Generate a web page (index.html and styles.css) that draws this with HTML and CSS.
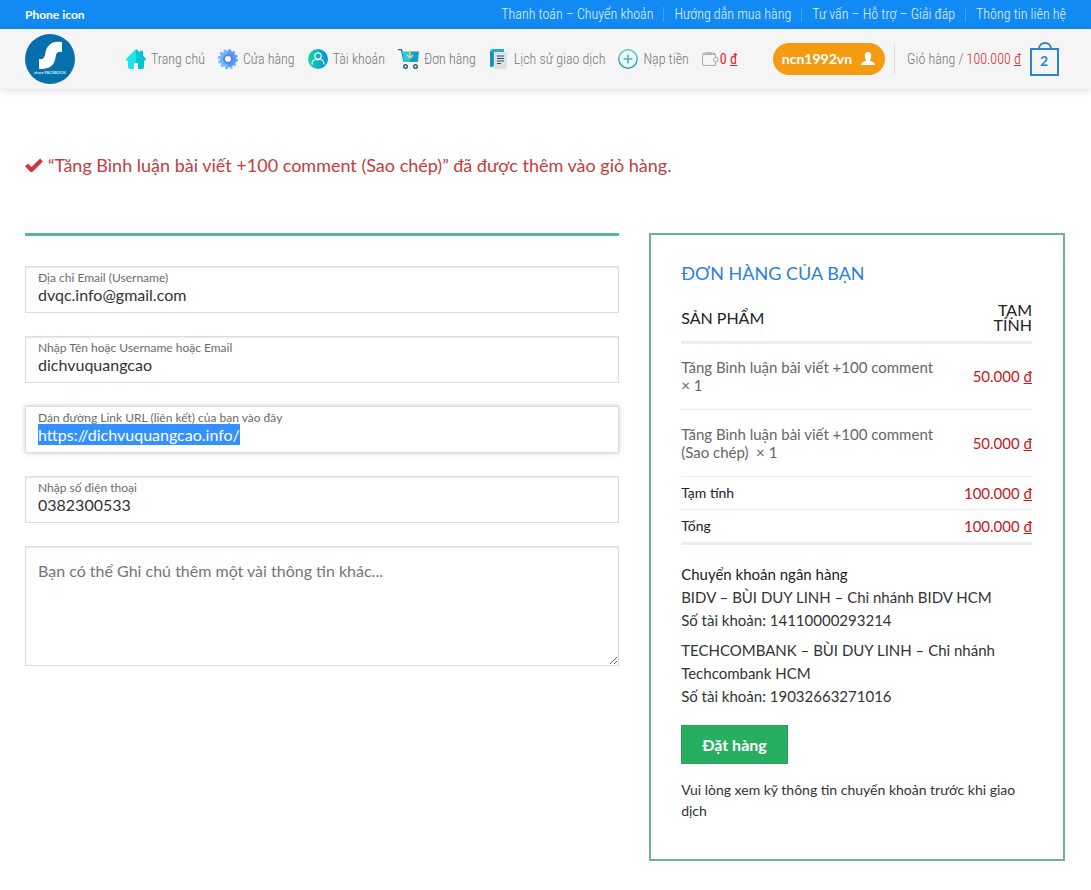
FILE: index.html
```html
<!DOCTYPE html>
<html lang="vi">
<head>
<meta charset="utf-8">
<meta name="viewport" content="width=device-width, initial-scale=1">
<title>Thanh toán</title>
<link rel="stylesheet" href="styles.css">
</head>
<body>
<div class="topbar">
  <strong class="topbar-title">Phone icon</strong>
  <nav class="topbar-nav">
    <a href="#">Thanh toán – Chuyển khoản</a>
    <a href="#">Hướng dẫn mua hàng</a>
    <a href="#">Tư vấn – Hỗ trợ – Giải đáp</a>
    <a href="#">Thông tin liên hệ</a>
  </nav>
</div>
<header class="header">
  <a class="logo" href="#" aria-label="share FACEBOOK">
    <svg width="50" height="50" viewBox="0 0 50 50"><circle cx="25" cy="25" r="25" fill="#0670ad"/><path d="M37 8v10q-5-1-6 3-1 9-6 12-4 2-11 2V25q5 1 6-4 1-9 7-12 4-2 10-1z" fill="#fff"/><text x="25" y="40" class="logo-text" text-anchor="middle">share FACEBOOK</text></svg>
  </a>
  <nav class="menu">
    <a href="#"><svg width="20" height="20" viewBox="0 0 20 20"><path d="M10 0 0 10v1.500h2V18q0 2 2 2h4v-6h2z" fill="#1de4ed"/><path d="m10 0 4 3.500V2h3v4.500l3 3.500v1.500h-2V18q0 2-2 2h-4v-6h-2z" fill="#06c4d3"/></svg>Trang chủ</a>
    <a href="#"><svg width="20" height="20" viewBox="0 0 20 20"><circle cx="10" cy="10" r="9" fill="none" stroke="#6fb1fb" stroke-width="2" stroke-dasharray="2.8 1.912"/><circle cx="10" cy="10" r="8.3" fill="#74b4fb"/><path d="M10 1.700a8.300 8.300 0 0 1 0 16.600z" fill="#5e96f7"/><circle cx="10" cy="10" r="5" fill="#4c87ee"/><circle cx="10" cy="10" r="3" fill="#f5f5f5"/></svg>Cửa hàng</a>
    <a href="#"><svg width="20" height="20" viewBox="0 0 20 20"><defs><linearGradient id="user-fill"><stop stop-color="#12d6a0"/><stop offset="1" stop-color="#0991dc"/></linearGradient></defs><circle cx="10" cy="10" r="10" fill="url(#user-fill)"/><g fill="none" stroke="#e9fffa" stroke-width="1.200"><circle cx="10" cy="7" r="3.200"/><path d="M4 15.500c0-3 2-5 4-5.500l2 1 2-1c2 .5 4 2.500 4 5.500"/></g></svg>Tài khoản</a>
    <a href="#"><svg width="21" height="20" viewBox="0 0 21 20"><path d="M0 .7h3.500L6 12.500" fill="none" stroke="#256c91" stroke-width="1.300"/><path d="M4 2.500h8V13H6z" fill="#25c7eb"/><path d="M12 2.500h9L20 13h-8z" fill="#159ed1"/><path d="M12 1v7.500M9 6l3 3 3-3" fill="none" stroke="#ecdc5b" stroke-width="1.500"/><circle cx="7.500" cy="17.500" r="1.800" fill="#fff" stroke="#225f80" stroke-width="1.400"/><circle cx="17.500" cy="17.500" r="1.800" fill="#fff" stroke="#225f80" stroke-width="1.400"/></svg>Đơn hàng</a>
    <a href="#"><svg width="20" height="20" viewBox="0 0 20 20"><path d="M3 0h12v3H6v15H1V2z" fill="#24abd4"/><path d="M1 3h3v15H2z" fill="#2187ad"/><path d="M5 3h13v15q0 2-2 2H6q-3-1-2-3h1z" fill="#dce3e8"/><path d="M8 7h7M8 9.500h7M8 12h7M8 14.500h4" stroke="#34495d" stroke-width="1.200"/></svg>Lịch sử giao dịch</a>
    <a href="#"><svg width="20" height="20" viewBox="0 0 20 20"><defs><linearGradient id="plus-stroke" x2="0" y2="1"><stop stop-color="#4bd79e"/><stop offset="1" stop-color="#2c9ad9"/></linearGradient></defs><circle cx="10" cy="10" r="9.200" fill="none" stroke="url(#plus-stroke)" stroke-width="1.500"/><path d="M10 5.500v9M5.500 10h9" stroke="#37bcc0" stroke-width="1.600"/></svg>Nạp tiền</a>
    <a href="#" class="wallet"><svg width="17" height="14" viewBox="0 0 17 14"><path d="M13.500 4V2.500h-12q-1-.8 0-1.500h11v1.500M.6 2v10q0 1.400 1.400 1.400h11.500V10M13.500 4v1.500M4 1.500 7 .5l3 1M12.500 5.500h3.200v4.200h-3.200q-2-2 0-4.200z" fill="none" stroke="#aaa"/></svg><span class="money">0 <u>đ</u></span></a>
  </nav>
  <a class="account" href="#">ncn1992vn<svg width="14" height="14" viewBox="0 0 14 14"><path d="M7 0c2.500 0 3.500 2 3.200 4.500-.2 2-1.200 3-1.200 4 1 1 4 1.200 5 3.500V13H0v-1c1-2.300 4-2.500 5-3.500 0-1-1-2-1.200-4C3.500 2 4.500 0 7 0z" fill="#fff"/></svg></a>
  <a class="cart" href="#"><span>Giỏ hàng / <span class="money">100.000 <u>đ</u></span></span><svg width="29" height="35" viewBox="0 0 29 35"><path d="M1 7h27v26H1zM9 7c0-8 12-8 12 0" fill="none" stroke="#2b84d0" stroke-width="2"/><text x="14" y="24" text-anchor="middle" class="cart-count">2</text></svg></a>
</header>
<main class="page">
  <p class="notice"><svg width="18" height="14" viewBox="0 0 18 14"><path d="M1.500 7 6.500 12 16.500 2" fill="none" stroke="#d33638" stroke-width="4"/></svg>“Tăng Bình luận bài viết +100 comment (Sao chép)” đã được thêm vào giỏ hàng.</p>
  <form class="checkout">
    <section class="details">
      <div class="field"><label for="email">Địa chỉ Email (Username)</label><input id="email" type="text" value="dvqc.info@gmail.com"></div>
      <div class="field"><label for="name">Nhập Tên hoặc Username hoặc Email</label><input id="name" type="text" value="dichvuquangcao"></div>
      <div class="field"><label for="link">Dán đường Link URL (liên kết) của bạn vào đây</label><input id="link" type="text" value="https://dichvuquangcao.info/"></div>
      <div class="field"><label for="phone">Nhập số điện thoại</label><input id="phone" type="text" value="0382300533"></div>
      <textarea class="note" aria-label="Ghi chú" placeholder="Bạn có thể Ghi chú thêm một vài thông tin khác..."></textarea>
    </section>
    <section class="order">
      <div class="order-box">
        <h2>ĐƠN HÀNG CỦA BẠN</h2>
        <table>
          <thead><tr><th>SẢN PHẨM</th><th class="amount">TẠM TÍNH</th></tr></thead>
          <tbody>
            <tr><td>Tăng Bình luận bài viết +100 comment <strong>× 1</strong></td><td class="amount">50.000 <u>đ</u></td></tr>
            <tr><td>Tăng Bình luận bài viết +100 comment (Sao chép)&nbsp; <strong>× 1</strong></td><td class="amount">50.000 <u>đ</u></td></tr>
          </tbody>
          <tfoot>
            <tr><th>Tạm tính</th><td class="amount">100.000 <u>đ</u></td></tr>
            <tr><th>Tổng</th><td class="amount">100.000 <u>đ</u></td></tr>
          </tfoot>
        </table>
        <div class="payment">
          <h3>Chuyển khoản ngân hàng</h3>
          <p>BIDV – BÙI DUY LINH – Chi nhánh BIDV HCM<br>Số tài khoản: 14110000293214</p>
          <p>TECHCOMBANK – BÙI DUY LINH – Chi nhánh Techcombank HCM<br>Số tài khoản: 19032663271016</p>
        </div>
        <button class="submit" type="submit">Đặt hàng</button>
        <p class="terms">Vui lòng xem kỹ thông tin chuyển khoản trước khi giao dịch</p>
      </div>
    </section>
  </form>
</main>
<script src="script.js"></script>
</body>
</html>
```
FILE: styles.css
```css
* { box-sizing: border-box; }
body { margin: 0; background: #fff; color: #333; font: 15px/23px Lato, "Noto Sans", sans-serif; }
a { color: inherit; text-decoration: none; }
p, h2, h3 { margin: 0; }
svg { flex: none; }
.topbar { display: flex; justify-content: space-between; align-items: center; min-height: 29px; padding: 0 25px; background: #128af3; color: #fff; }
.topbar-title { font-size: 12px; font-weight: 700; }
.topbar-nav { display: flex; font: 300 14px/15px "Roboto Condensed", "Liberation Sans Narrow", Roboto, sans-serif; color: #e2f2ff; }
.topbar-nav a { padding: 0 10px; border-left: 1px solid #419ff5; }
.topbar-nav a:first-child { border-left: 0; }
.topbar-nav a:last-child { padding-right: 0; }
.header { display: flex; align-items: center; min-height: 60px; padding: 0 32px 0 25px; background: #f5f5f5; box-shadow: 0 1px 8px rgba(0, 0, 0, .15); color: #777; font: 300 14px/20px "Roboto Condensed", "Liberation Sans Narrow", Roboto, sans-serif; }
.logo { display: flex; margin-right: 51px; }
.logo-text { font: 700 4px Lato, sans-serif; fill: #d5e9f5; }
.menu { display: flex; gap: 13px; }
.menu a { display: flex; align-items: center; gap: 5px; white-space: nowrap; }
.menu .wallet { gap: 1px; }
.money { color: #d8262c; }
.menu .money { font-weight: 400; }
.account { display: flex; align-items: center; gap: 9px; height: 32px; margin-left: auto; padding: 0 10px 0 9px; border-radius: 16px; background: #f39c12; color: #fff; font: 700 14px/20px Lato, sans-serif; }
.cart { display: flex; align-items: center; gap: 9px; margin-left: 9px; padding-left: 13px; background: linear-gradient(#ddd, #ddd) left center / 1px 30px no-repeat; white-space: nowrap; }
.cart-count { font: 700 14px Lato, sans-serif; fill: #2b84d0; }
.page { padding: 62px 11px 29px 10px; }
.notice { display: flex; align-items: center; gap: 5px; padding: 0 15px; color: #c43c3e; font-size: 18px; line-height: 28px; }
.checkout { display: grid; grid-template-columns: 7fr 5fr; margin-top: 54px; }
.details, .order { padding: 0 15px; }
.details::before { content: ""; display: block; height: 3px; margin-bottom: 30px; background: #5bb79b; }
.field { display: flex; flex-direction: column; height: 47px; margin-bottom: 23px; padding: 4px 12px 0; border: 1px solid #ddd; box-shadow: inset 0 1px 2px rgba(0, 0, 0, .1); }
.field:focus-within { box-shadow: 0 0 5px #ccc; }
.field label { color: #6b6b6b; font-size: 12px; line-height: 13px; }
.field input { padding: 0; border: 0; outline: 0; background: none; color: #333; font: 16px/21px Lato, "Noto Sans", sans-serif; }
.field input::selection { background: #3390ff; color: #fff; }
.note { display: block; width: 100%; height: 120px; padding: 12px; border: 1px solid #ddd; box-shadow: inset 0 1px 2px rgba(0, 0, 0, .1); font: 16px/23px Lato, "Noto Sans", sans-serif; }
.note::placeholder { color: #757575; }
.order-box { padding: 26px 31px 38px 30px; border: 2px solid #6ab19e; }
h2 { color: #2b7fdc; font-size: 18px; font-weight: 400; line-height: 25px; }
table { width: 100%; margin-top: 16px; border-collapse: collapse; line-height: 18px; }
th, td { padding: 0; text-align: left; border-bottom: 1px solid #ececec; }
th { color: #222; font-weight: 400; }
thead th { height: 40px; padding-bottom: 8px; border-bottom: 3px solid #ececec; font-size: 16px; line-height: 15px; }
tbody td { height: 67px; color: #666; }
tbody td:first-child { padding-right: 20px; }
tbody strong { display: inline-block; font-weight: 400; }
tfoot th, tfoot td { height: 33px; }
tfoot th { font-size: 14px; }
tfoot tr:last-child > * { height: 34px; border-bottom: 3px solid #ececec; }
.amount { width: 70px; text-align: right; }
td.amount { color: #c9151b; white-space: nowrap; }
.payment { margin-top: 17px; }
.payment h3 { color: #222; font-size: 15px; font-weight: 400; line-height: 24px; }
.payment p + p { margin-top: 7px; }
.submit { display: block; height: 39px; margin-top: 17px; padding: 0 20px; border: 1px solid #2a9f59; background: #27ae60; color: #fff; font: 700 16px/23px Lato, "Noto Sans", sans-serif; }
.terms { margin-top: 15px; font-size: 14px; line-height: 21px; }
```
FILE: script.js
```js
const link = document.getElementById("link");
link.focus();
link.select();
```
